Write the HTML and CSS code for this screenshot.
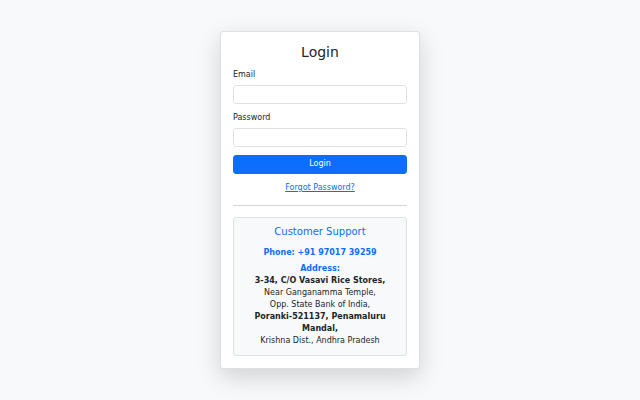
FILE: index.html
```html
<!DOCTYPE html>
<html lang="en">
<head>
<meta charset="utf-8">
<title>Login</title>
<link rel="stylesheet" href="styles.css">
</head>
<body>
<main class="page">
  <div class="card">
    <h3 class="title">Login</h3>
    <form class="form">
      <div class="field">
        <label class="label" for="email">Email</label>
        <input class="input" id="email" type="email">
      </div>
      <div class="field">
        <label class="label" for="password">Password</label>
        <input class="input" id="password" type="password">
      </div>
      <button class="btn" type="button">Login</button>
    </form>
    <div class="forgot"><a href="#" class="link">Forgot Password?</a></div>
    <hr class="divider">
    <div class="support">
      <h5 class="support-title">Customer Support</h5>
      <p class="phone">Phone: +91 97017 39259</p>
      <p class="address">
        <span class="addr-label">Address:</span><br>
        <strong>3-34, C/O Vasavi Rice Stores,</strong><br>
        Near Ganganamma Temple,<br>
        Opp. State Bank of India,<br>
        <strong>Poranki-521137, Penamaluru Mandal,</strong><br>
        Krishna Dist., Andhra Pradesh
      </p>
    </div>
  </div>
</main>
</body>
</html>
```
FILE: styles.css
```css
* { box-sizing: border-box; }
html, body { margin: 0; padding: 0; }
body {
  background: #f8f9fa;
  font-family: "DejaVu Sans", sans-serif;
  font-size: 8px;
  line-height: 12px;
  color: #212529;
}
.page {
  min-height: 100vh;
  display: flex;
  align-items: center;
  justify-content: center;
}
.card {
  width: 200px;
  background: #fff;
  border: 1px solid rgba(0,0,0,0.12);
  border-radius: 3px;
  padding: 12px;
  box-shadow: 0 8px 24px rgba(0,0,0,0.16);
}
.title {
  margin: 0 0 8px;
  font-size: 14px;
  line-height: 16.8px;
  font-weight: 500;
  text-align: center;
}
.form { display: flex; flex-direction: column; }
.field { display: flex; flex-direction: column; margin-bottom: 8px; }
.label { margin-bottom: 4px; line-height: 12px; }
.input {
  height: 19px;
  border: 1px solid #dee2e6;
  border-radius: 3px;
  background: #fff;
  padding: 3px 6px;
  font: inherit;
}
.btn {
  height: 19px;
  border: 1px solid #0d6efd;
  background: #0d6efd;
  color: #fff;
  border-radius: 3px;
  font: inherit;
  line-height: 12px;
  padding: 0;
}
.forgot { margin-top: 8px; text-align: center; }
.link { color: #0d6efd; text-decoration: underline; }
.divider {
  margin: 11px 0 11px;
  border: 0;
  border-top: 1px solid #d3d4d5;
  height: 0;
}
.support {
  background: #f8f9fa;
  border: 1px solid #dee2e6;
  border-radius: 3px;
  padding: 8px;
  text-align: center;
}
.support-title {
  margin: 0 0 9px;
  font-size: 10px;
  line-height: 12px;
  font-weight: 500;
  color: #0d6efd;
}
.phone { margin: 0 0 4px; font-weight: bold; color: #0d6efd; }
.address { margin: 0; }
.addr-label { font-weight: bold; color: #0d6efd; }
.address strong { font-weight: bold; }
```
